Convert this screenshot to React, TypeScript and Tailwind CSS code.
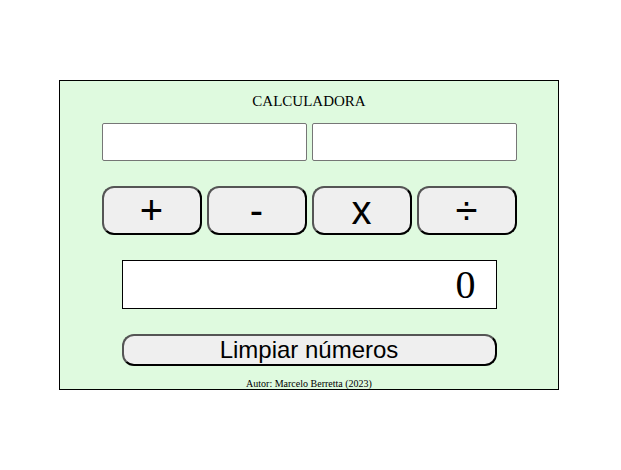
import { useState } from "react";

type Operation = "+" | "-" | "x" | "÷";

const operations: { symbol: Operation; name: string }[] = [
  { symbol: "+", name: "Sumar" },
  { symbol: "-", name: "Restar" },
  { symbol: "x", name: "Multiplicar" },
  { symbol: "÷", name: "Dividir" },
];

const buttonStyle =
  "flex items-center justify-center rounded-xl border-2 border-t-[#555] border-l-[#555] border-r-black border-b-black bg-[#efefef] font-['Liberation_Sans',Arial,sans-serif] text-black";

function calculate(a: number, b: number, operation: Operation) {
  if (operation === "+") return a + b;
  if (operation === "-") return a - b;
  if (operation === "x") return a * b;
  return a / b;
}

function NumberInput(props: { label: string; value: string; onChange: (value: string) => void }) {
  return (
    <input
      aria-label={props.label}
      inputMode="decimal"
      value={props.value}
      onChange={(event) => props.onChange(event.target.value)}
      className="h-[38px] w-full min-w-0 rounded-xs border border-[#767676] bg-white px-2 text-right text-2xl"
    />
  );
}

export default function App() {
  const [first, setFirst] = useState("");
  const [second, setSecond] = useState("");
  const [result, setResult] = useState(0);

  const clear = () => {
    setFirst("");
    setSecond("");
    setResult(0);
  };

  return (
    <div className="bg-white py-20 pr-[3px] font-['Liberation_Serif','Times_New_Roman',serif] text-black">
      <main className="mx-auto flex w-full max-w-[500px] flex-col items-center border border-black bg-[#dffadf] pt-3">
        <h1 className="text-[15px] leading-4">CALCULADORA</h1>

        <div className="mt-3.5 flex w-full max-w-[415px] flex-col gap-[25px]">
          <div className="grid grid-cols-2 gap-[5px]">
            <NumberInput label="Primer número" value={first} onChange={setFirst} />
            <NumberInput label="Segundo número" value={second} onChange={setSecond} />
          </div>

          <div className="grid grid-cols-4 gap-[5px]">
            {operations.map(({ symbol, name }) => (
              <button
                key={symbol}
                type="button"
                title={name}
                onClick={() => setResult(calculate(Number(first), Number(second), symbol))}
                className={`${buttonStyle} h-[49px] text-[40px] leading-[45px]`}
              >
                {symbol}
              </button>
            ))}
          </div>

          <div className="flex flex-col gap-[25px] px-5">
            <output className="block h-[49px] border border-black bg-white px-5 text-right text-[40px] leading-[47px]">
              {result}
            </output>
            <button type="button" onClick={clear} className={`${buttonStyle} h-8 text-2xl leading-7`}>
              Limpiar números
            </button>
          </div>
        </div>

        <footer className="mt-3 text-[10px] leading-[11px]">Autor: Marcelo Berretta (2023)</footer>
      </main>
    </div>
  );
}
